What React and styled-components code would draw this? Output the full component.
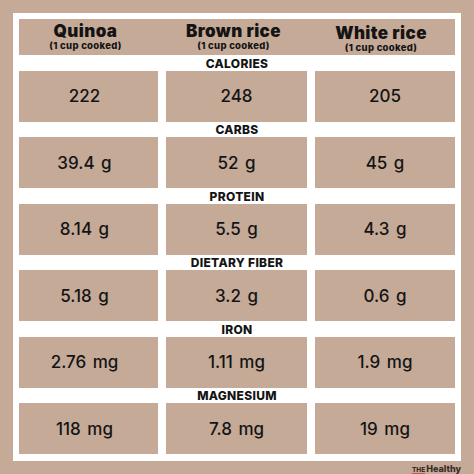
import React from 'react';
import styled, { createGlobalStyle } from 'styled-components';

const GlobalStyle = createGlobalStyle`
  html, body {
    margin: 0;
    padding: 0;
    background: #c5aa98;
  }
`;

const Page = styled.div`
  width: 474px;
  height: 474px;
  box-sizing: border-box;
  padding: 13px 13px 0 13px;
  background: #c5aa98;
  font-family: Inter, 'Liberation Sans', sans-serif;
  color: #141414;
`;

const Panel = styled.div`
  width: 448px;
  box-sizing: border-box;
  background: #ffffff;
  padding: 6px 6px 7px 6px;
`;

const Header = styled.div`
  display: grid;
  grid-template-columns: 147px 149px 140px;
  height: 36px;
  background: #c5aa98;
`;

const HeadCell = styled.div`
  display: flex;
  flex-direction: column;
  align-items: center;
  justify-content: center;
  padding-top: ${(p) => p.$drop || 0}px;
  padding-right: ${(p) => p.$shift || 0}px;
`;

const HeadName = styled.div`
  font-size: 17px;
  font-weight: 900;
  line-height: 17px;
  letter-spacing: 0.4px;
`;

const HeadSub = styled.div`
  font-size: 9.5px;
  font-weight: 800;
  line-height: 11px;
  letter-spacing: 0.3px;
`;

const Label = styled.div`
  height: 15.5px;
  display: flex;
  align-items: center;
  justify-content: center;
  font-size: 12px;
  font-weight: 800;
  letter-spacing: 0.3px;
  padding-top: 1px;
  box-sizing: border-box;
`;

const Row = styled.div`
  display: grid;
  grid-template-columns: 139px 141px 140px;
  column-gap: 8px;
  height: 51px;
`;

const Cell = styled.div`
  background: #c5aa98;
  display: flex;
  align-items: center;
  justify-content: center;
  font-size: 17px;
  font-weight: 500;
  word-spacing: 2px;
  padding-right: ${(p) => p.$shift || 0}px;
`;

const Brand = styled.div`
  display: flex;
  justify-content: flex-end;
  align-items: baseline;
  gap: 1px;
  padding-top: 2px;
  font-size: 9px;
  font-weight: 800;
  color: #3a2d2a;
`;

const BrandThe = styled.span`
  font-size: 6.5px;
  color: #3a2d2a;
  border-bottom: 1px solid #d0553f;
  line-height: 6px;
`;

const columns = [
  { name: 'Quinoa', shift: 14, drop: 0 },
  { name: 'Brown rice', shift: 14, drop: 0 },
  { name: 'White rice', shift: 8, drop: 3 },
];

const rows = [
  { label: 'CALORIES', values: ['222', '248', '205'] },
  { label: 'CARBS', values: ['39.4 g', '52 g', '45 g'] },
  { label: 'PROTEIN', values: ['8.14 g', '5.5 g', '4.3 g'] },
  { label: 'DIETARY FIBER', values: ['5.18 g', '3.2 g', '0.6 g'] },
  { label: 'IRON', values: ['2.76 mg', '1.11 mg', '1.9 mg'] },
  { label: 'MAGNESIUM', values: ['118 mg', '7.8 mg', '19 mg'] },
];

export default function App() {
  return (
    <Page>
      <GlobalStyle />
      <Panel>
        <Header>
          {columns.map((c) => (
            <HeadCell key={c.name} $shift={c.shift} $drop={c.drop}>
              <HeadName>{c.name}</HeadName>
              <HeadSub>(1 cup cooked)</HeadSub>
            </HeadCell>
          ))}
        </Header>
        {rows.map((r) => (
          <React.Fragment key={r.label}>
            <Label>{r.label}</Label>
            <Row>
              {r.values.map((v, i) => (
                <Cell key={i} $shift={i === 0 ? 8 : 0}>
                  {v}
                </Cell>
              ))}
            </Row>
          </React.Fragment>
        ))}
      </Panel>
      <Brand>
        <BrandThe>THE</BrandThe>
        <span>Healthy</span>
      </Brand>
    </Page>
  );
}
